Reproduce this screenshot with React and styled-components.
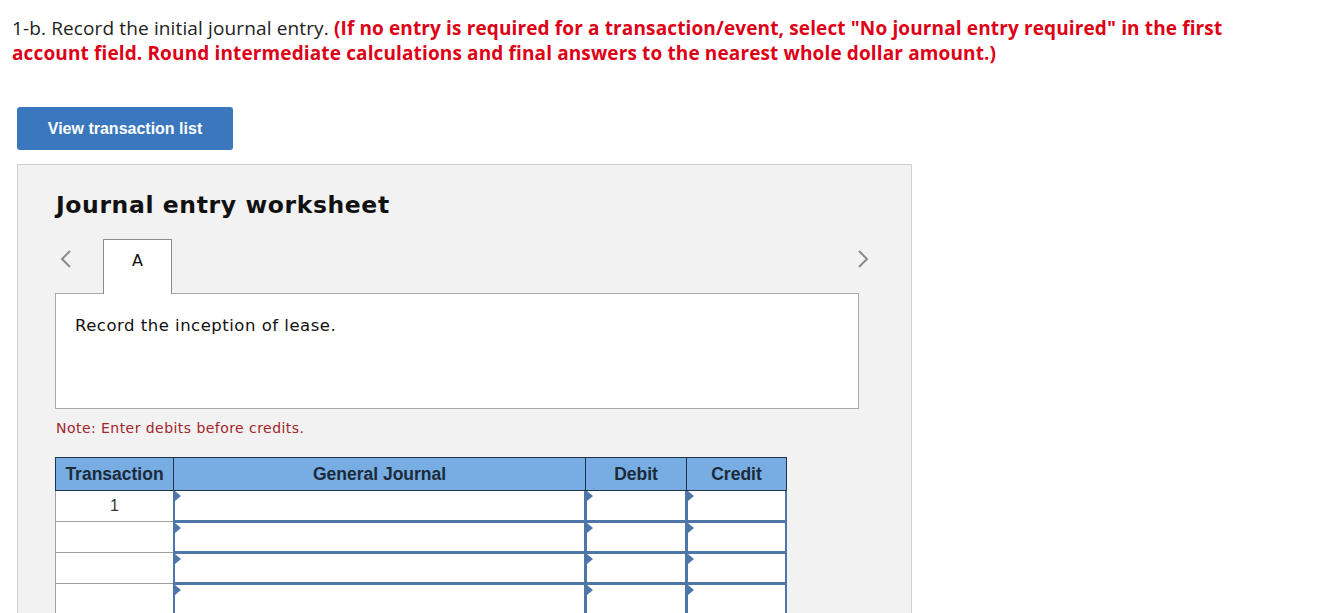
import React from "react";
import styled, { createGlobalStyle } from "styled-components";

const Global = createGlobalStyle`
  html, body { margin: 0; padding: 0; background: #fff; }
  body { font-family: "Open Sans", "Liberation Sans", sans-serif; }
`;

const Page = styled.div`
  padding: 16px 0 0 12px;
`;

const Prompt = styled.p`
  margin: 0;
  width: 1260px;
  font-family: "Open Sans", "Lato", sans-serif;
  font-size: 19px;
  line-height: 25px;
  letter-spacing: 0.13px;
  color: #222;
`;

const Hint = styled.b`
  color: #dd0016;
  font-weight: 700;
`;

const Button = styled.button`
  display: block;
  margin: 41px 0 0 5px;
  width: 216px;
  height: 43px;
  border: none;
  border-radius: 3px;
  background: #3a77bd;
  color: #fff;
  font-family: "Liberation Sans", Arial, sans-serif;
  font-weight: 700;
  font-size: 16px;
  cursor: pointer;
`;

const Panel = styled.section`
  margin: 14px 0 0 5px;
  width: 895px;
  height: 460px;
  background: #f2f2f2;
  border: 1px solid #cfcfcf;
  border-bottom: none;
  padding: 27px 0 0 37px;
  box-sizing: border-box;
`;

const Title = styled.h2`
  margin: 0 0 0 1px;
  font-family: "DejaVu Sans", Verdana, sans-serif;
  font-weight: 700;
  font-size: 23.5px;
  letter-spacing: 0.6px;
  line-height: 26px;
  color: #111;
`;

const TabBar = styled.div`
  margin-top: 21px;
  width: 804px;
  display: flex;
  align-items: stretch;
  height: 55px;
  position: relative;
  z-index: 1;
`;

const Chevron = styled.button`
  border: none;
  background: none;
  padding: ${(p) => (p.$right ? "0" : "0 0 0 5px")};
  width: ${(p) => (p.$right ? "30px" : "48px")};
  height: 40px;
  display: flex;
  align-items: center;
  justify-content: ${(p) => (p.$right ? "flex-end" : "flex-start")};
  margin-left: ${(p) => (p.$right ? "auto" : "0")};
  margin-right: ${(p) => (p.$right ? "-10px" : "0")};
  cursor: pointer;
`;

const Tab = styled.div`
  width: 69px;
  height: 55px;
  box-sizing: border-box;
  background: #fff;
  border: 1px solid #8c8c8c;
  border-bottom: none;
  display: flex;
  justify-content: center;
  padding-top: 11px;
  font-family: "DejaVu Sans", Verdana, sans-serif;
  font-size: 16px;
  color: #111;
`;

const Card = styled.div`
  margin-top: -1px;
  width: 804px;
  height: 116px;
  box-sizing: border-box;
  background: #fff;
  border: 1px solid #a8a8a8;
  padding: 22px 0 0 19px;
  font-family: "DejaVu Sans", Verdana, sans-serif;
  font-size: 16.5px;
  letter-spacing: 0.5px;
  line-height: 20px;
  color: #111;
`;

const Note = styled.p`
  margin: 10px 0 0 1px;
  font-family: "DejaVu Sans", Verdana, sans-serif;
  font-size: 14px;
  letter-spacing: 0.45px;
  line-height: 18px;
  color: #a3242a;
`;

const Grid = styled.div`
  margin-top: 20px;
  display: grid;
  grid-template-columns: 118px 412px 101px 101px;
  width: 732px;
  font-family: "Liberation Sans", Arial, sans-serif;
`;

const Head = styled.div`
  height: 34px;
  box-sizing: border-box;
  background: #78ade3;
  border-top: 1px solid #1f3448;
  border-bottom: 1px solid #1f3448;
  border-left: 1px solid #1f3448;
  ${(p) => p.$last && "border-right: 1px solid #1f3448;"}
  display: flex;
  align-items: center;
  justify-content: center;
  font-weight: 700;
  font-size: 17.5px;
  color: #1c2b3a;
`;

const TxCell = styled.div`
  height: 31px;
  box-sizing: border-box;
  background: #fff;
  border-left: 1px solid #a0a0a0;
  border-bottom: 1px solid #a0a0a0;
  display: flex;
  justify-content: center;
  padding-top: 6px;
  font-size: 16px;
  color: #333;
`;

const Input = styled.div`
  position: relative;
  height: 31px;
  box-sizing: border-box;
  background: #fff;
  border: 2px solid #4e76a8;
  border-top: ${(p) => (p.$first ? "0" : "1px solid #4e76a8")};
  border-right-width: ${(p) => (p.$last ? "2px" : "1px")};
`;

const Marker = styled.span`
  position: absolute;
  left: 0;
  top: 0;
  width: 0;
  height: 0;
  border-top: 5px solid transparent;
  border-bottom: 5px solid transparent;
  border-left: 6px solid #4e76a8;
`;

const Arrow = ({ dir }) => (
  <svg width="12" height="20" viewBox="0 0 12 20">
    <path
      d={dir === "left" ? "M10 2 L2 10 L10 18" : "M2 2 L10 10 L2 18"}
      fill="none"
      stroke="#8a8a8a"
      strokeWidth="2"
    />
  </svg>
);

const rows = ["1", "", "", ""];

export default function App() {
  return (
    <Page>
      <Global />
      <Prompt>
        1-b. Record the initial journal entry.{" "}
        <Hint>
          (If no entry is required for a transaction/event, select "No journal entry required" in the first
          <br />
          account field. Round intermediate calculations and final answers to the nearest whole dollar amount.)
        </Hint>
      </Prompt>
      <Button>View transaction list</Button>
      <Panel>
        <Title>Journal entry worksheet</Title>
        <TabBar>
          <Chevron aria-label="previous">
            <Arrow dir="left" />
          </Chevron>
          <Tab>A</Tab>
          <Chevron $right aria-label="next">
            <Arrow dir="right" />
          </Chevron>
        </TabBar>
        <Card>Record the inception of lease.</Card>
        <Note>Note: Enter debits before credits.</Note>
        <Grid>
          <Head>Transaction</Head>
          <Head>General Journal</Head>
          <Head>Debit</Head>
          <Head $last>Credit</Head>
          {rows.map((r, i) => (
            <React.Fragment key={i}>
              <TxCell>{r}</TxCell>
              <Input $first={i === 0}>
                <Marker />
              </Input>
              <Input $first={i === 0}>
                <Marker />
              </Input>
              <Input $first={i === 0} $last>
                <Marker />
              </Input>
            </React.Fragment>
          ))}
        </Grid>
      </Panel>
    </Page>
  );
}
